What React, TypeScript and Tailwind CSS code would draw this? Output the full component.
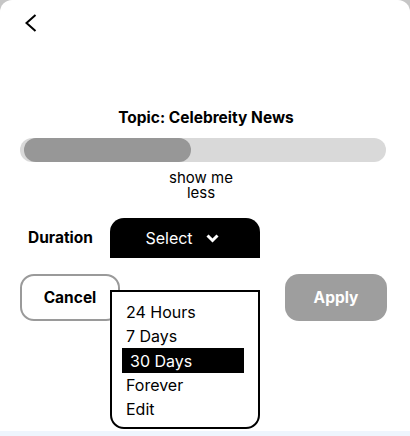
export default function App() {
  const options = ["24 Hours", "7 Days", "30 Days", "Forever", "Edit"];
  const selected = "30 Days";

  return (
    <div className="relative w-[410px] h-[436px] overflow-hidden bg-[#c6c6c6] font-['Inter',sans-serif] text-black">
      <div className="flex flex-col h-[431px] bg-white rounded-t-[12px]">
        {/* Back */}
        <div className="h-[108px] pt-[14px] pl-[25px]">
          <svg width="12" height="18" viewBox="0 0 12 18" fill="none">
            <polyline points="10.5,1 1.5,9 10.5,17" stroke="black" strokeWidth="2" />
          </svg>
        </div>

        <h1 className="text-center text-[15.5px] font-bold leading-[20px] pl-[2px]">Topic: Celebreity News</h1>

        {/* Slider */}
        <div className="ml-[20px] mr-[24px] mt-[10px] h-[24px] rounded-full bg-[#d9d9d9]">
          <div className="ml-[4px] w-[167px] h-full rounded-full bg-[#979797]" />
        </div>

        <p className="ml-[161px] mt-[8px] w-[80px] text-center text-[15px] leading-[15px]">show me less</p>

        {/* Duration */}
        <div className="mt-[18px] flex items-center h-[40px]">
          <span className="pl-[28px] w-[110px] text-[15.5px] font-bold">Duration</span>
          <button className="w-[150px] h-[40px] bg-black rounded-t-[14px] flex items-center justify-center gap-[13px] pr-[6px] text-white text-[16px]">
            Select
            <svg width="13" height="9" viewBox="0 0 13 9" fill="none">
              <polyline points="1.5,1.5 6.5,6.5 11.5,1.5" stroke="white" strokeWidth="3" />
            </svg>
          </button>
        </div>

        {/* Actions */}
        <div className="mt-[16px] flex justify-between pl-[20px] pr-[23px]">
          <button className="w-[100px] h-[47px] rounded-[14px] border-[2.5px] border-[#9a9a9a] text-[15.5px] font-bold">
            Cancel
          </button>
          <button className="w-[102px] h-[47px] rounded-[14px] bg-[#9e9e9e] text-white text-[15.5px] font-bold">
            Apply
          </button>
        </div>
      </div>
      <div className="h-[5px] bg-[#eef5fd]" />

      {/* Dropdown menu */}
      <ul className="absolute left-[110px] top-[290px] w-[150px] h-[139px] border-2 border-black rounded-b-[14px] bg-white pt-[8px] px-[10px] text-[16px]">
        {options.map((o) =>
          o === selected ? (
            <li key={o} className="h-[25px] flex items-center bg-black text-white pl-[8px] w-[122px]">
              {o}
            </li>
          ) : (
            <li key={o} className="h-[24px] flex items-center pl-[4px]">
              {o}
            </li>
          )
        )}
      </ul>
    </div>
  );
}
